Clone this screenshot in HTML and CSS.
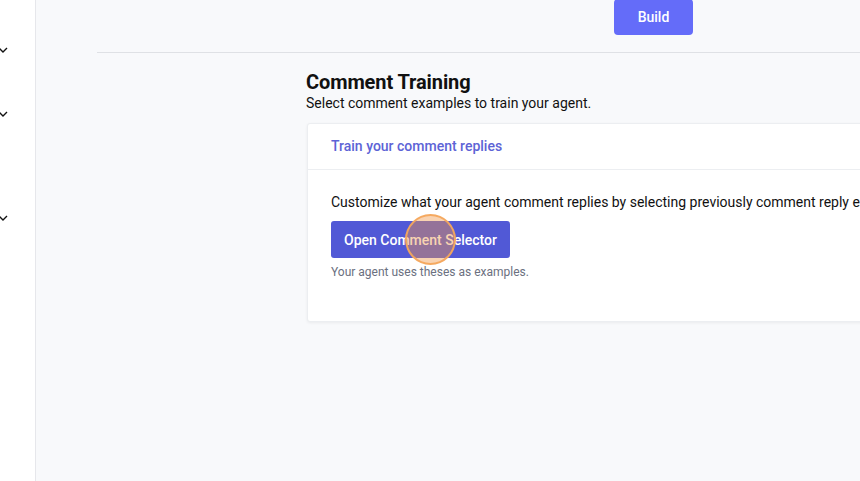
FILE: index.html
```html
<!DOCTYPE html>
<html>
<head>
<meta charset="utf-8">
<link rel="stylesheet" href="styles.css">
</head>
<body>
<div class="app">
  <aside class="sidebar">
    <div class="chev c1"><svg width="10" height="6" viewBox="0 0 10 6"><path d="M1 1l4 4 4-4" fill="none" stroke="#111" stroke-width="1.4"/></svg></div>
    <div class="chev c2"><svg width="10" height="6" viewBox="0 0 10 6"><path d="M1 1l4 4 4-4" fill="none" stroke="#111" stroke-width="1.4"/></svg></div>
    <div class="chev c3"><svg width="10" height="6" viewBox="0 0 10 6"><path d="M1 1l4 4 4-4" fill="none" stroke="#111" stroke-width="1.4"/></svg></div>
  </aside>
  <main class="main">
    <div class="topbar">
      <button class="build">Build</button>
    </div>
    <section class="content">
      <h1 class="title">Comment Training</h1>
      <p class="subtitle">Select comment examples to train your agent.</p>
      <div class="card">
        <div class="card-head">Train your comment replies</div>
        <div class="card-body">
          <p class="desc">Customize what your agent comment replies by selecting previously comment reply examples.</p>
          <div class="btn-wrap">
            <button class="open">Open Comment Selector</button>
            <span class="cursor"></span>
          </div>
          <p class="hint">Your agent uses theses as examples.</p>
        </div>
      </div>
    </section>
  </main>
</div>
</body>
</html>
```
FILE: styles.css
```css
* { box-sizing: border-box; }
html, body { margin: 0; padding: 0; }
body {
  width: 860px; height: 481px; overflow: hidden;
  font-family: Roboto, "Liberation Sans", sans-serif;
  background: #f8f9fb;
}
.app { display: flex; height: 481px; }
.sidebar {
  width: 36px; flex: none; background: #fff;
  border-right: 1px solid #e6e7eb;
  position: relative;
}
.chev { position: absolute; left: -2px; line-height: 0; }
.c1 { top: 47px; }
.c2 { top: 111px; }
.c3 { top: 215px; }
.main { flex: 1; min-width: 0; position: relative; overflow: hidden; }
.topbar {
  height: 54px; margin-left: 61px;
  border-bottom: 1px solid #dfe1e5;
  padding-left: 517px;
}
.build {
  display: block;
  width: 79px; height: 36px; margin-top: -1px;
  background: #646cf9; color: #fff; border: none; border-radius: 4px;
  font-family: inherit; font-size: 14px; font-weight: 500;
  padding: 0;
}
.content { padding: 17px 0 0 270px; }
.title {
  margin: 0; font-size: 20px; font-weight: 700; color: #111;
  line-height: 24px; letter-spacing: -0.1px;
}
.subtitle { margin: 0; font-size: 14px; line-height: 18px; color: #111; }
.card {
  margin-top: 11px; margin-left: 1px; width: 700px;
  background: #fff; border-radius: 3px;
  box-shadow: 0 1px 3px rgba(0,0,0,0.06);
  border: 1px solid #eceef1;
}
.card-head {
  height: 46px; padding: 14px 0 0 23px;
  font-size: 14px; font-weight: 500; color: #5d63d6;
  border-bottom: 1px solid #eceef1;
}
.card-body { padding: 23px 0 41px 23px; }
.desc { margin: 0; font-size: 14px; color: #111; line-height: 18px; white-space: nowrap; }
.btn-wrap { position: relative; margin-top: 10px; width: 179px; }
.open {
  display: block;
  width: 179px; height: 37px;
  background: #5159d6; color: #fff; border: none; border-radius: 3px;
  font-family: inherit; font-size: 14px; font-weight: 500; padding: 0;
}
.cursor {
  position: absolute; left: 74px; top: -7px;
  width: 51px; height: 51px; border-radius: 50%;
  background: rgba(240, 150, 70, 0.42);
  border: 2px solid rgba(244, 167, 92, 0.95);
}
.hint { margin: 7px 0 0; font-size: 12px; color: #6b7080; line-height: 15px; }
```
